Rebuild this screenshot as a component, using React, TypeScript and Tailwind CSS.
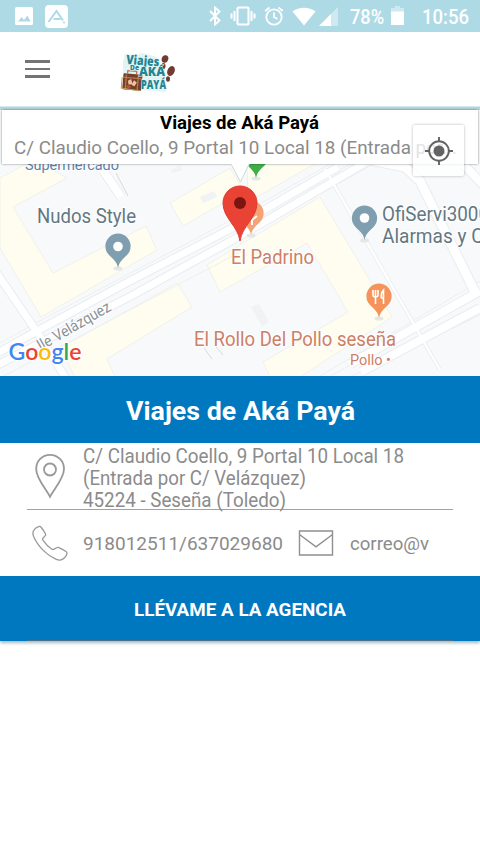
import type { ReactNode } from "react";

const ADDRESS = ["C/ Claudio Coello, 9 Portal 10 Local 18", "(Entrada por C/ Velázquez)", "45224 - Seseña (Toledo)"];

export default function App() {
  return (
    <div className="flex h-[853px] w-[480px] flex-col overflow-hidden bg-white font-[Roboto,sans-serif]">
      <StatusBar />
      <header className="flex h-[75px] shrink-0 items-center border-b border-[#d5eaef] bg-white pl-[25px]">
        <button aria-label="Menú" className="flex w-[25px] flex-col gap-[5px]">
          <span className="h-[2.4px] bg-[#747474]" />
          <span className="h-[2.4px] bg-[#747474]" />
          <span className="h-[2.4px] bg-[#747474]" />
        </button>
        <AgencyLogo />
      </header>

      <MapPanel />

      <section className="shrink-0 shadow-[0_2px_3px_rgba(60,100,120,0.45)]">
        <h1 className="flex h-[67px] items-center justify-center bg-[#0078bf] pt-[3px] text-white">
          <Fit width={229} size={26.7} height={32} baseline={25} weight={700}>Viajes de Aká Payá</Fit>
        </h1>
        <div className="mx-[27px] flex h-[67px] items-center border-b border-[#a2a2a2]">
          <svg width="32" height="45" viewBox="0 0 32 45" className="ml-[7px] shrink-0" fill="none" stroke="#999" strokeWidth="1.8">
            <path d="M16 42.8C12.2 35.1 2.2 24.7 2.2 15C2.2 7.100 8.2.9 16 .9s14 6.2 14 14.1C30 24.7 19.8 35.100 16 42.800Z" />
            <circle cx="16" cy="15.500" r="6" />
          </svg>
          <div className="ml-[17px] flex flex-col text-[#8b8b8b]">
            <Fit width={321} size={19.3} height={22} baseline={19.5}>{ADDRESS[0]}</Fit>
            <Fit width={223} size={19.3} height={22} baseline={19.5}>{ADDRESS[1]}</Fit>
            <Fit width={203} size={19.3} height={22} baseline={19.5}>{ADDRESS[2]}</Fit>
          </div>
        </div>
        <div className="flex h-[66px] items-center pl-[32px] text-[#8b8b8b]">
          <svg width="36" height="36" viewBox="0 0 36 36" className="shrink-0" fill="none" stroke="#999" strokeWidth="1.3" strokeLinejoin="round">
            <path d="M6.600 1.600C7.400 1.200 8.300 1.300 8.900 2c1.500 1.800 3.300 4.400 4.500 6.700.500 1 .300 1.700-.500 2.400l-1.800 1.900c-.700.800-.600 1.500 0 2.400 2.300 3.600 5.200 6.400 8.900 8.800.800.500 1.400.500 2.200-.100l2.400-1.300c.800-.500 1.500-.500 2.300-.100 2.400 1.100 5 2.400 7.100 3.800.900.600 1.200 1.300.900 2.200-.800 2.700-3.100 5.200-5.800 6.100-1.600.500-3.100.200-4.800-.500C15.800 30.900 6.200 22.300 1.500 11.300.800 9.300.600 7.700 1.500 5.800 2.500 3.800 4.400 2.400 6.600 1.600Z" />
          </svg>
          <span className="ml-[15px]"><Fit width={200} size={19} height={24} baseline={19}>918012511/637029680</Fit></span>
          <svg width="36" height="26" viewBox="0 0 36 26" className="ml-[15px] shrink-0" fill="none" stroke="#8f8f8f" strokeWidth="1.4">
            <path d="M1.500 1h33v24h-33ZM1.500 4.500 18 16.800 34.500 4.500" />
          </svg>
          <span className="ml-[16px]"><Fit width={79} size={19} height={24} baseline={19}>correo@v</Fit></span>
        </div>
        <button className="flex h-[65px] w-full flex-col items-center justify-between bg-[#0078bf] text-white">
          <span className="flex grow items-center pt-[2px]">
            <Fit width={212} size={18.7} height={24} baseline={19} weight={700}>LLÉVAME A LA AGENCIA</Fit>
          </span>
          <span className="h-px w-[426px] bg-[#49718a]" />
        </button>
      </section>
    </div>
  );
}

// One line of text stretched to an exact width.
function Fit({ width, size, height, baseline, weight = 400, children }: {
  width: number; size: number; height: number; baseline: number; weight?: number; children: ReactNode;
}) {
  return (
    <svg width={width} height={height} className="block overflow-visible">
      <text y={baseline} fontSize={size} fontWeight={weight} fill="currentColor" textLength={width} lengthAdjust="spacingAndGlyphs">{children}</text>
    </svg>
  );
}

function StatusBar() {
  return (
    <div className="flex h-8 shrink-0 items-center bg-[#aedae6] pl-[15px] text-white">
      <svg width="18" height="18" viewBox="0 0 18 18">
        <rect width="18" height="18" rx="1.500" fill="#fff" />
        <path d="M3 14.500 6.500 10l2.500 3 3.500-4.500 3 6Z" fill="#aedae6" />
      </svg>
      <svg width="23" height="23" viewBox="0 0 23 23" className="ml-[12px]">
        <rect width="23" height="23" rx="4" fill="#fff" />
        <path d="M3.500 17 11.500 6 18 15.500M8.500 14h7" fill="none" stroke="#aedae6" strokeWidth="2" />
        <circle cx="19" cy="17.500" r="1" fill="#aedae6" />
      </svg>
      <svg width="12" height="20" viewBox="0 0 12 20" className="ml-[141px]" fill="none" stroke="#fff" strokeWidth="1.900">
        <path d="m1 5 9.500 9.500L6 18.500V1.500l4.500 4L1 15" />
      </svg>
      <svg width="26" height="20" viewBox="0 0 26 20" className="ml-[9px]" fill="none" stroke="#fff" strokeWidth="2">
        <rect x="7.500" y="1.500" width="11" height="17" rx="1" />
        <path d="M4.500 5v10M1.500 7.500v5M21.500 5v10M24.500 7.500v5" />
      </svg>
      <svg width="20" height="20" viewBox="0 0 20 20" className="ml-[8px]" fill="none" stroke="#fff" strokeWidth="1.800">
        <circle cx="10" cy="11" r="7.700" />
        <path d="M10 6.500V11l3.500 2M1.200 5 5.500 1.500M18.800 5l-4.300-3.500" />
      </svg>
      <svg width="24" height="19" viewBox="0 0 24 19" className="ml-[8px]">
        <path d="M.5 4.500C7 -.5 17 -.5 23.500 4.500L12 18.500Z" fill="#fff" />
      </svg>
      <svg width="19" height="19" viewBox="0 0 19 19" className="ml-[3px]">
        <path d="M0 19 19 0v19Z" fill="#fff" fillOpacity=".4" />
        <path d="M0 19 12 7v12Z" fill="#fff" />
      </svg>
      <span className="ml-[12px]"><Fit width={34} size={19.5} height={22} baseline={18.5} weight={500}>78%</Fit></span>
      <svg width="13" height="20" viewBox="0 0 13 20" className="ml-[7px]">
        <path d="M4 0h5v2h4v4H0V2h4Z" fill="#fff" fillOpacity=".4" />
        <path d="M0 5.500h13V19H0Z" fill="#fff" />
      </svg>
      <span className="ml-[18px]"><Fit width={47} size={19.5} height={22} baseline={18.5} weight={500}>10:56</Fit></span>
    </div>
  );
}

function AgencyLogo() {
  return (
    <svg width="56" height="44" viewBox="0 0 56 44" className="mt-[5px] ml-[70px]">
      <path d="m3 12 2-8 12 1 6-2 14 4 2 10 6 0 1 25-24-2-19-3Z" fill="#e0f4f5" />
      <g fill="#713b31">
        <ellipse cx="45" cy="9" rx="3.300" ry="3.800" transform="rotate(15 45 9)" />
        <ellipse cx="43.500" cy="16" rx="2" ry="3" />
        <ellipse cx="51" cy="21" rx="3.600" ry="5.200" transform="rotate(22 51 21)" />
        <ellipse cx="48" cy="29" rx="2" ry="2.800" />
      </g>
      <g transform="rotate(5 12 30)">
        <rect x="3" y="24" width="19" height="16" rx="1" fill="#744028" />
        <path d="M7 24v-3h9v3M3 28h19M6 25v15M18 25v15" fill="none" stroke="#bd7654" strokeWidth="1.300" />
        <path d="m8 31 3-2 2 5-4 1ZM14 30l3 2-2 4-3-1Z" fill="#efc1a0" />
        <path d="M7 36h4v2H7Z" fill="#c35840" />
        <path d="M2 28v11l18 1" fill="none" stroke="#c69f4e" />
      </g>
      <g fontFamily="Open Sans, sans-serif" fontWeight="800" fill="#258493" stroke="#e8fbfa" strokeWidth="1" paintOrder="stroke">
        <text x="6" y="14" fontSize="13" textLength="33" lengthAdjust="spacingAndGlyphs" transform="rotate(4 6 14)">Viajes</text>
        <text x="10" y="20" fontSize="6" textLength="9" lengthAdjust="spacingAndGlyphs">De</text>
        <text x="19" y="26" fontSize="12.500" textLength="26" lengthAdjust="spacingAndGlyphs">AKÁ</text>
        <text x="21" y="39" fontSize="12.500" textLength="25" lengthAdjust="spacingAndGlyphs">PAYÁ</text>
      </g>
    </svg>
  );
}

function MapPanel() {
  return (
    <div className="relative h-[269px] shrink-0 overflow-hidden bg-[#f8f9fb]">
      <MapDrawing />
      <div className="absolute inset-x-0 top-0 h-[3px] bg-[#b5d5db]" />
      {/* marker info window */}
      <div className="absolute top-[3px] left-[2px] flex h-[54px] w-[476px] flex-col bg-white pl-[12px] shadow-[0_0_2px_rgba(0,0,0,0.5)]">
        <strong className="ml-[146px] h-[24px] text-black"><Fit width={159} size={18.5} height={24} baseline={19} weight={700}>Viajes de Aká Payá</Fit></strong>
        <span className="text-[#8b8b8b]"><Fit width={443} size={19.2} height={24} baseline={20}>C/ Claudio Coello, 9 Portal 10 Local 18 (Entrada por...</Fit></span>
      </div>
      <svg width="20" height="19" viewBox="0 0 20 19" className="absolute top-[56px] left-[230px]">
        <path d="M0 0h20l-9 18.500Z" fill="#fff" />
        <path d="m1 1 9.500 18L19 1" fill="none" stroke="#cad8d5" />
      </svg>
      <button aria-label="Mi ubicación" className="absolute top-[18px] left-[413px] flex size-[51px] items-center justify-center rounded-[2px] bg-white/75 shadow-[0_0_3px_rgba(0,0,0,0.3)]">
        <svg width="28" height="28" viewBox="0 0 28 28" fill="none" stroke="#636363" strokeWidth="1.900">
          <circle cx="14" cy="14" r="9.800" />
          <circle cx="14" cy="14" r="5.500" fill="#636363" stroke="none" />
          <path d="M14 0v5M14 23v5M0 14h5M23 14h5" />
        </svg>
      </button>
    </div>
  );
}

function Pin({ x, y, color, children }: { x: number; y: number; color: string; children?: ReactNode }) {
  return (
    <g transform={`translate(${x} ${y})`}>
      <ellipse cy="33.500" rx="4.500" ry="2" fill="#e3e7e6" />
      <path d="M0 33C-1 27-4 25-9 20A12.600 12.600 0 1 1 9 20C4 25 1 27 0 33Z" fill={color} />
      {children}
    </g>
  );
}

function MapDrawing() {
  return (
    <svg width="480" height="269" viewBox="0 107 480 269" className="block">
      {/* buildings */}
      <g fill="#fffdef" stroke="#f1f1eb">
        <path d="M0 178 34 160 67 178 13 207 53 273 146 226 157 250 41 317 0 248Z" />
        <path d="m170 203 60-35 14 23-61 35Z" />
        <path d="m177 283 15 24-85 52 9 20H76L60 348Z" />
        <path d="m207 265 113-68 72 120-95 62h-26l-8-17 85-50-41-69-87 49Z" />
        <path d="M247 162h71l-70 40Z" />
      </g>
      <g fill="#f0f2f4">
        <path d="m200 197 14-6 3 6-14 6ZM251 307l8-3 10 18-7 5ZM170 171l10-6 2 5-9 3Z" />
      </g>
      {/* streets */}
      <g fill="none" stroke="#eceff1">
        <path d="M0 343 32 325 233 219 337 160M0 378 90 331 242 251M0 350 40 331 238 227 352 163M240 239 375 163M352 376 480 315M331 376 480 290M320 376 480 281" />
      </g>
      <g fill="none" stroke="#e9edf0" strokeLinejoin="round">
        <path d="M-4 272 37 332 67 380" strokeWidth="9" />
        <path d="M103 170 121 197" strokeWidth="10" />
        <path d="M-4 354 37 331 130 281 240 224 338 167" strokeWidth="9" />
        <path d="M-4 366 40 343 133 295 240 236 365 163" strokeWidth="9" />
        <path d="M361 372 480 308M350 364 480 291" strokeWidth="10" />
        <path d="M370 160 405 167 420 181 475 292" strokeWidth="11" />
        <path d="M464 165 485 187" strokeWidth="10" />
        <path d="M325 169 440 370" strokeWidth="4" />
      </g>
      <g fill="none" stroke="#fff" strokeLinejoin="round">
        <path d="M-4 272 37 332 67 380" strokeWidth="7" />
        <path d="M103 170 121 197" strokeWidth="8" />
        <path d="M-4 354 37 331 130 281 240 224 338 167" strokeWidth="7" />
        <path d="M-4 366 40 343 133 295 240 236 365 163" strokeWidth="7" />
        <path d="M361 372 480 308M350 364 480 291" strokeWidth="8" />
        <path d="M370 160 405 167 420 181 475 292" strokeWidth="9" />
        <path d="M464 165 485 187" strokeWidth="8" />
        <path d="M325 169 440 370" strokeWidth="2.500" />
      </g>
      <path d="m116 173 12 23M204 348l8 11M216 347l7 8" stroke="#d6dadd" />

      {/* place labels */}
      <g stroke="#fff" strokeWidth="2" paintOrder="stroke" strokeLinejoin="round">
        <text x="25" y="170" fontSize="15.500" textLength="94" lengthAdjust="spacingAndGlyphs" fill="#5d81ab">Supermercado</text>
        <g fill="#637781">
          <text x="37" y="223" fontSize="20" textLength="99" lengthAdjust="spacingAndGlyphs">Nudos Style</text>
          <text x="382" y="220.500" fontSize="19.500" textLength="107" lengthAdjust="spacingAndGlyphs">OfiServi3000</text>
          <text x="382" y="242.500" fontSize="19.500" textLength="112" lengthAdjust="spacingAndGlyphs">Alarmas y Cá</text>
        </g>
        <g fill="#cc8066">
          <text x="231" y="263.500" fontSize="19.500" textLength="83" lengthAdjust="spacingAndGlyphs">El Padrino</text>
          <text x="194" y="346" fontSize="19.500" textLength="202" lengthAdjust="spacingAndGlyphs">El Rollo Del Pollo seseña</text>
          <text x="350" y="364.500" fontSize="15.500" textLength="41" lengthAdjust="spacingAndGlyphs">Pollo •</text>
        </g>
        <text transform="translate(41 351) rotate(-30)" fontSize="15.500" textLength="82" lengthAdjust="spacingAndGlyphs" fill="#8b9297">lle Velázquez</text>
      </g>

      {/* pins */}
      <Pin x={118} y={235} color="#7f9fb0"><circle cy="11.500" r="4.800" fill="#fff" /></Pin>
      <Pin x={364.5} y={207} color="#7f9fb0"><circle cy="11" r="4.800" fill="#fff" /></Pin>
      <Pin x={379} y={285} color="#f5935b">
        <path d="M-6 5v5q0 2 2.500 2v7M-3.500 5v8M-1 5v5q0 2-2.500 2M4.500 19V5q-3 3-2 8h2" fill="none" stroke="#fff" strokeWidth="1.600" />
      </Pin>
      <Pin x={256} y={145} color="#3fae49" />
      <Pin x={251} y={202} color="#f6a273" />
      <path d="m252 220 5-4m-5 4v5" stroke="#fff" strokeWidth="2" />
      <path d="M240 241C238 226 223 218 223 203a17 17 0 1 1 34 0C257 218 242 226 240 241Z" fill="#ea4335" stroke="#e13b31" />
      <circle cx="240" cy="203" r="6" fill="#7b150f" />

      <text x="8.500" y="360" fontFamily="Lato, sans-serif" fontSize="23" fontWeight="600" textLength="73" lengthAdjust="spacingAndGlyphs" stroke="#fff" strokeWidth="2.500" paintOrder="stroke">
        <tspan fill="#4285f4">G</tspan><tspan fill="#ea4335">o</tspan><tspan fill="#fbbc05">o</tspan><tspan fill="#4285f4">g</tspan><tspan fill="#34a853">l</tspan><tspan fill="#ea4335">e</tspan>
      </text>
    </svg>
  );
}
